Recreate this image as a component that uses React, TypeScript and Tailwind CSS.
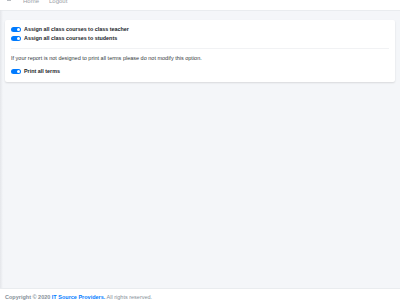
import { useState } from 'react';

const Toggle = ({ on, onClick }: { on: boolean; onClick: () => void }) => (
  <button
    onClick={onClick}
    className={`relative inline-flex h-[5px] w-[10px] shrink-0 items-center rounded-full ${on ? 'bg-[#007bff]' : 'bg-[#adb5bd]'}`}
  >
    <span
      className={`absolute h-[3px] w-[3px] rounded-full bg-white ${on ? 'left-[6px]' : 'left-[1px]'}`}
    />
  </button>
);

const App = () => {
  const [opts, setOpts] = useState({ teacher: true, students: true, terms: true });
  const flip = (k: keyof typeof opts) => setOpts({ ...opts, [k]: !opts[k] });

  return (
    <div
      className="relative flex h-[300px] w-[400px] flex-col overflow-hidden bg-[#f4f6f9] text-[#212529]"
      style={{ fontFamily: '"Liberation Sans", Arial, sans-serif' }}
    >
      {/* sidebar shadow */}
      <div className="absolute left-0 top-[10px] bottom-0 w-[3px] bg-gradient-to-r from-[#e4e6ea] to-transparent" />

      {/* Navbar (scrolled) */}
      <div className="-mt-[8px] flex h-[19px] shrink-0 items-start border-b border-[#e9ecef] bg-white pl-[7px] pt-[5px] text-[6px] text-[#9aa0a6]">
        <span className="flex w-[16px] pt-[1px]">
          <svg width="4" height="3" viewBox="0 0 4 3" fill="#9aa0a6">
            <rect x="0" y="0" width="4" height="0.7" />
            <rect x="0" y="1.2" width="4" height="0.7" />
            <rect x="0" y="2.3" width="4" height="0.7" />
          </svg>
        </span>
        <span className="w-[26px]">Home</span>
        <span>Logout</span>
      </div>

      {/* Content */}
      <div className="relative px-[5px] pt-[9px]">
        <div className="rounded-[2px] bg-white px-[6px] pb-[8px] pt-[7px] shadow-[0_1px_2px_rgba(0,0,0,0.12)]">
          <div className="flex flex-col gap-[4px] text-[5.4px] font-bold leading-[5px]">
            <label className="flex items-center gap-[3px]">
              <Toggle on={opts.teacher} onClick={() => flip('teacher')} />
              Assign all class courses to class teacher
            </label>
            <label className="flex items-center gap-[3px]">
              <Toggle on={opts.students} onClick={() => flip('students')} />
              Assign all class courses to students
            </label>
          </div>
          <div className="mt-[7px] border-t border-[#f1f2f4]" />
          <p className="mt-[6px] text-[5.5px] leading-[7px] text-[#343a40]">
            If your report is not designed to print all terms please do not modify this option.
          </p>
          <label className="mt-[7px] flex items-center gap-[3px] text-[5.4px] font-bold leading-[5px]">
            <Toggle on={opts.terms} onClick={() => flip('terms')} />
            Print all terms
          </label>
        </div>
      </div>

      <div className="flex-1" />

      {/* Footer */}
      <div className="relative h-[12px] shrink-0 border-t border-[#e9ecef] bg-white pl-[5px] pt-[5px] text-[5.5px] leading-[6px] text-[#869099]">
        <span className="font-bold">
          Copyright © 2020 <span className="text-[#007bff]">IT Source Providers.</span>
        </span>{' '}
        All rights reserved.
      </div>
    </div>
  );
};

export default App;
